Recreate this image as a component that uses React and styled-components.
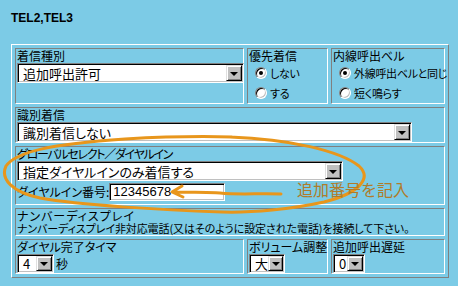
import React from 'react';
import styled, { createGlobalStyle } from 'styled-components';

const GlobalStyle = createGlobalStyle`
    html, body {
        margin: 0;
        padding: 0;
        background: #7ccbe6;
    }
    body {
        font-family: "Noto Sans CJK JP", "Noto Sans", sans-serif;
        color: #000;
    }
`

const Page = styled.div`
    position: relative;
    width: 458px;
    height: 286px;
    box-sizing: border-box;
    padding: 11px 0 0 11px;
    overflow: hidden;
`

const Title = styled.h1`
    margin: 0;
    font-family: "Liberation Sans", Arial, sans-serif;
    font-weight: bold;
    font-size: 12px;
    line-height: 14px;
    height: 14px;
`

const Frame = styled.div`
    margin-top: 19px;
    width: 438px;
    box-sizing: border-box;
    border: 1px solid;
    border-color: #fff #808080 #808080 #fff;
    padding: 3px;
    display: grid;
    grid-template-columns: 229px 81px 114px;
    grid-template-rows: 56px 36px 59px 28px 35px;
    gap: 3px;
`

const Cell = styled.div`
    box-sizing: border-box;
    border: 1px solid;
    border-color: #808080 #fff #fff #808080;
    padding: 0 1px;
    grid-column: ${p => (p.$wide ? '1 / -1' : 'auto')};
    font-size: 12px;
    line-height: 14px;
    font-feature-settings: "palt";
    white-space: nowrap;
`

const Label = styled.div`
    height: 14px;
    letter-spacing: ${p => p.$ls || 0}px;
`

const Note = styled.div`
    font-size: ${p => p.$size || 11}px;
    line-height: 13px;
    height: 13px;
    letter-spacing: ${p => p.$ls || 0}px;
`

const SelectBox = styled.div`
    display: flex;
    box-sizing: border-box;
    width: ${p => p.$w}px;
    height: ${p => p.$h || 20}px;
    border: 1px solid;
    border-color: #808080 #fff #fff #808080;
    box-shadow: inset 1px 1px #000, inset -1px -1px #c0c0c0;
    background: #fff;
    padding: 1px;
`

const SelectValue = styled.div`
    flex: 1;
    display: flex;
    align-items: center;
    font-size: 13px;
    line-height: 15px;
    padding-left: 4px;
`

const DropButton = styled.div`
    width: 16px;
    box-sizing: border-box;
    background: #c0c0c0;
    border: 1px solid;
    border-color: #dfdfdf #000 #000 #dfdfdf;
    box-shadow: inset 1px 1px #fff, inset -1px -1px #808080;
    display: flex;
    align-items: center;
    justify-content: center;

    &::after {
        content: "";
        width: 0;
        height: 0;
        border-left: 4px solid transparent;
        border-right: 4px solid transparent;
        border-top: 4px solid #000;
        margin-top: 1px;
    }
`

const RadioRow = styled.div`
    display: flex;
    align-items: center;
    height: 20px;
    padding-left: 6px;
    gap: 3px;
    font-size: 11px;
    letter-spacing: -0.3px;
`

const RadioDot = styled.span`
    position: relative;
    width: 12px;
    height: 12px;
    box-sizing: border-box;
    border-radius: 50%;
    border: 1px solid;
    border-color: #808080 #fff #fff #808080;
    box-shadow: inset 1px 1px #000, inset -1px -1px #c0c0c0;
    background: #fff;
    flex: none;

    &::after {
        content: "";
        display: ${p => (p.$on ? 'block' : 'none')};
        position: absolute;
        left: 3px;
        top: 3px;
        width: 4px;
        height: 4px;
        border-radius: 50%;
        background: #000;
    }
`

const InlineRow = styled.div`
    display: flex;
    align-items: center;
    gap: ${p => p.$gap || 0}px;
    margin-top: ${p => p.$mt || 0}px;
`

const TextInput = styled.div`
    box-sizing: border-box;
    width: 116px;
    height: 18px;
    border: 1px solid;
    border-color: #808080 #fff #fff #808080;
    box-shadow: inset 1px 1px #000, inset -1px -1px #c0c0c0;
    background: #fff;
    font-family: "Liberation Sans", Arial, sans-serif;
    font-size: 13px;
    line-height: 16px;
    padding-left: 3px;
`

const Overlay = styled.svg`
    position: absolute;
    left: 0;
    top: 0;
    pointer-events: none;
`

const Callout = styled.span`
    position: absolute;
    left: 297px;
    top: 180px;
    font-size: 16px;
    line-height: 19px;
    color: #b07c2a;
    white-space: nowrap;
`

const Select = ({ w, h, value }) => (
    <SelectBox $w={w} $h={h}>
        <SelectValue>{value}</SelectValue>
        <DropButton />
    </SelectBox>
)

const Radio = ({ on, children }) => (
    <RadioRow>
        <RadioDot $on={on} />
        <span>{children}</span>
    </RadioRow>
)

export default function App() {
    return (
        <Page>
            <GlobalStyle />
            <Title>TEL2,TEL3</Title>
            <Frame>
                <Cell>
                    <Label>着信種別</Label>
                    <Select w={227} value="追加呼出許可" />
                </Cell>
                <Cell>
                    <Label>優先着信</Label>
                    <Radio on>しない</Radio>
                    <Radio>する</Radio>
                </Cell>
                <Cell>
                    <Label>内線呼出ベル</Label>
                    <Radio on>外線呼出ベルと同じ</Radio>
                    <Radio>短く鳴らす</Radio>
                </Cell>

                <Cell $wide>
                    <Label>識別着信</Label>
                    <Select w={395} value="識別着信しない" />
                </Cell>

                <Cell $wide>
                    <Label $ls={-1.3}>グローバルセレクト／ダイヤルイン</Label>
                    <Select w={326} value="指定ダイヤルインのみ着信する" />
                    <InlineRow $mt={2}>
                        <span>ダイヤルイン番号:</span>
                        <TextInput>12345678</TextInput>
                    </InlineRow>
                </Cell>

                <Cell $wide>
                    <Note $size={12} $ls={1}>ナンバーディスプレイ</Note>
                    <Note $ls={-0.1}>ナンバーディスプレイ非対応電話(又はそのように設定された電話)を接続して下さい。</Note>
                </Cell>

                <Cell>
                    <Label>ダイヤル完了タイマ</Label>
                    <InlineRow $gap={2}>
                        <Select w={37} h={19} value="4" />
                        <span>秒</span>
                    </InlineRow>
                </Cell>
                <Cell>
                    <Label>ボリューム調整</Label>
                    <Select w={36} h={19} value="大" />
                </Cell>
                <Cell>
                    <Label>追加呼出遅延</Label>
                    <Select w={32} h={19} value="0" />
                </Cell>
            </Frame>

            <Overlay width="458" height="286" viewBox="0 0 458 286">
                <path
                    d="M 230 137 C 290 139, 340 151, 359 166 C 372 178, 360 193, 324 202 C 292 209, 252 213, 222 212 C 160 210, 80 205, 40 198 C 12 192, 0 179, 6 166 C 16 152, 50 144, 125 139 C 160 137, 200 136, 232 137"
                    fill="none"
                    stroke="#e8961c"
                    strokeWidth="3"
                    strokeLinecap="round"
                />
                <path
                    d="M 281 194 C 260 193, 240 195, 220 193 C 205 192, 190 192, 174 192 M 182 186 L 172 192 L 183 197"
                    fill="none"
                    stroke="#e8961c"
                    strokeWidth="3"
                    strokeLinecap="round"
                    strokeLinejoin="round"
                />
            </Overlay>
            <Callout>追加番号を記入</Callout>
        </Page>
    );
}
